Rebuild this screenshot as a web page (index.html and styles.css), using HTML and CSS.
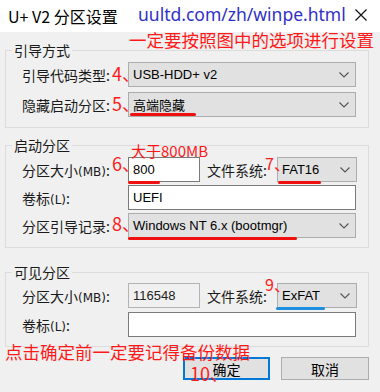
FILE: index.html
```html
<!DOCTYPE html>
<html lang="zh-CN">
<head>
<meta charset="UTF-8">
<title>U+ V2 分区设置</title>
<link rel="stylesheet" href="styles.css">
</head>
<body>
<div class="window">
  <header class="titlebar">
    <span class="title">U+ V2 分区设置</span>
    <svg class="close" width="12" height="12" viewBox="0 0 12 12"><path d="M0.5 0.5L11.5 11.5M11.5 0.5L0.5 11.5" stroke="#111" stroke-width="1.2" fill="none"/></svg>
  </header>

  <main class="content">
    <fieldset class="group g1">
      <legend>引导方式</legend>
      <div class="row">
        <label class="lbl">引导代码类型:</label>
        <div class="combo wide"><span>USB-HDD+ v2</span><svg class="arrow" width="10" height="6" viewBox="0 0 10 6"><polyline points="0.5,0.5 5,5 9.5,0.5" stroke="#555" stroke-width="1.1" fill="none"/></svg></div>
      </div>
      <div class="row">
        <label class="lbl">隐藏启动分区:</label>
        <div class="combo wide"><span>高端隐藏</span><svg class="arrow" width="10" height="6" viewBox="0 0 10 6"><polyline points="0.5,0.5 5,5 9.5,0.5" stroke="#555" stroke-width="1.1" fill="none"/></svg></div>
      </div>
    </fieldset>

    <fieldset class="group g2">
      <legend>启动分区</legend>
      <div class="row">
        <label class="lbl">分区大小<span class="latin">(MB)</span>:</label>
        <div class="field short">800</div>
        <label class="lbl-fs">文件系统:</label>
        <div class="combo fs"><span>FAT16</span><svg class="arrow" width="10" height="6" viewBox="0 0 10 6"><polyline points="0.5,0.5 5,5 9.5,0.5" stroke="#555" stroke-width="1.1" fill="none"/></svg></div>
      </div>
      <div class="row">
        <label class="lbl">卷标<span class="latin">(L)</span>:</label>
        <div class="field wide">UEFI</div>
      </div>
      <div class="row">
        <label class="lbl">分区引导记录:</label>
        <div class="combo wide"><span>Windows NT 6.x (bootmgr)</span><svg class="arrow" width="10" height="6" viewBox="0 0 10 6"><polyline points="0.5,0.5 5,5 9.5,0.5" stroke="#555" stroke-width="1.1" fill="none"/></svg></div>
      </div>
    </fieldset>

    <fieldset class="group g3">
      <legend>可见分区</legend>
      <div class="row">
        <label class="lbl">分区大小<span class="latin">(MB)</span>:</label>
        <div class="field short disabled">116548</div>
        <label class="lbl-fs">文件系统:</label>
        <div class="combo fs"><span>ExFAT</span><svg class="arrow" width="10" height="6" viewBox="0 0 10 6"><polyline points="0.5,0.5 5,5 9.5,0.5" stroke="#555" stroke-width="1.1" fill="none"/></svg></div>
      </div>
      <div class="row">
        <label class="lbl">卷标<span class="latin">(L)</span>:</label>
        <div class="field wide"></div>
      </div>
    </fieldset>

    <div class="buttons">
      <button class="btn primary">确定</button>
      <button class="btn">取消</button>
    </div>
  </main>

  <!-- annotations drawn over the dialog -->
  <span class="note url">uultd.com/zh/winpe.html</span>
  <span class="note tip-top">一定要按照图中的选项进行设置</span>
  <span class="note tip-size">大于800MB</span>
  <span class="note tip-bottom">点击确定前一定要记得备份数据</span>
  <span class="note num n4">4、</span>
  <span class="note num n5">5、</span>
  <span class="note num n6">6、</span>
  <span class="note num n7">7、</span>
  <span class="note num n8">8、</span>
  <span class="note num n9">9、</span>
  <span class="note num n10">10、</span>
  <i class="mark m5"></i>
  <i class="mark m6"></i>
  <i class="mark m7"></i>
  <i class="mark m8"></i>
  <i class="mark blue m9"></i>
</div>
</body>
</html>
```

FILE: styles.css
```css
body {
  margin: 0;
  background-color: #f0f0f0;
  font-family: "Noto Sans CJK SC", "Noto Sans", sans-serif;
  color: #1a1a1a;
  font-size: 14px;
}
.window {
  position: relative;
  width: 380px;
  height: 392px;
  overflow: hidden;
}
.titlebar {
  height: 32px;
  background: #fff;
  display: flex;
  align-items: center;
  padding-left: 8px;
}
.title {
  font-size: 16px;
  color: #000;
}
.close {
  margin-left: auto;
  margin-right: 13px;
  margin-top: -3px;
}
.content {
  padding: 0 11px 0 5px;
}
.group {
  margin: 0;
  border: 1px solid #dcdcdc;
  padding: 0 0 0 16px;
}
.group legend {
  margin-left: -10px;
  padding: 0 2px;
  line-height: 18px;
  font-size: 14px;
}
.g1 {
  margin-top: 9px;
  padding-top: 3px;
  padding-bottom: 10px;
}
.g2 {
  margin-top: 8px;
  padding-top: 3px;
  padding-bottom: 9px;
}
.g3 {
  margin-top: 15px;
  padding-top: 2px;
  padding-bottom: 9px;
}
.row {
  display: flex;
  align-items: center;
  height: 25px;
  margin-bottom: 4px;
}
.g1 .row {
  margin-bottom: 5px;
}
.g2 .row {
  margin-bottom: 3px;
}
.row:last-child {
  margin-bottom: 0;
}
.lbl {
  width: 106px;
  flex: none;
  white-space: nowrap;
}
.latin {
  font-family: "DejaVu Sans", sans-serif;
  font-size: 12px;
}
.lbl-fs {
  width: 70px;
  margin-left: 7px;
  white-space: nowrap;
}
.combo, .field {
  box-sizing: border-box;
  height: 25px;
  display: flex;
  align-items: center;
  padding-left: 4px;
  font-family: "Liberation Sans", sans-serif;
  font-size: 13px;
  color: #000;
}
.combo {
  background: #e1e1e1;
  border: 1px solid #adadad;
  padding-right: 6px;
}
.combo span {
  flex: 1;
  font-family: "Liberation Sans", "Noto Sans CJK SC", sans-serif;
}
.field {
  background: #fff;
  border: 1px solid #7a7a7a;
}
.field.disabled {
  background: #f0f0f0;
  border-color: #b4b4b4;
  color: #222;
}
.wide {
  width: 228px;
}
.short {
  width: 72px;
}
.combo.fs {
  width: 80px;
}
.buttons {
  display: flex;
  justify-content: flex-end;
  gap: 11px;
  margin-top: 10px;
}
.btn {
  box-sizing: border-box;
  width: 88px;
  height: 23px;
  background: #e1e1e1;
  border: 1px solid #adadad;
  font-family: "Noto Sans CJK SC", sans-serif;
  font-size: 14px;
  color: #000;
  padding: 0;
  line-height: 20px;
}
.btn.primary {
  width: 87px;
  border: 2px solid #0078d7;
}

/* annotations */
.note {
  position: absolute;
  color: #ff1a1a;
  line-height: 1;
  white-space: nowrap;
}
.url {
  left: 138px;
  top: 6px;
  font-family: "Noto Sans", sans-serif;
  font-size: 17.5px;
  color: #3030c8;
}
.tip-top {
  left: 129px;
  top: 31px;
  font-size: 17.5px;
}
.tip-bottom {
  left: 5px;
  top: 343px;
  font-size: 17.5px;
}
.tip-size {
  left: 131px;
  top: 143px;
  font-size: 15px;
}
.num {
  font-size: 18px;
}
.n4 { left: 112px; top: 64px; }
.n5 { left: 112px; top: 94px; }
.n6 { left: 112px; top: 154px; }
.n7 { left: 265px; top: 155px; font-size: 16px; }
.n8 { left: 112px; top: 214px; }
.n9 { left: 265px; top: 276px; font-size: 16px; }
.n10 { left: 190px; top: 364px; }
.mark {
  position: absolute;
  height: 3px;
  border-radius: 2px;
  background: #f01010;
}
.mark.blue {
  background: #1e90e0;
}
.m5 { left: 130px; top: 113px; width: 66px; }
.m6 { left: 128px; top: 181px; width: 32px; }
.m7 { left: 278px; top: 181px; width: 43px; }
.m8 { left: 128px; top: 237px; width: 169px; }
.m9 { left: 276px; top: 307px; width: 49px; }
```
